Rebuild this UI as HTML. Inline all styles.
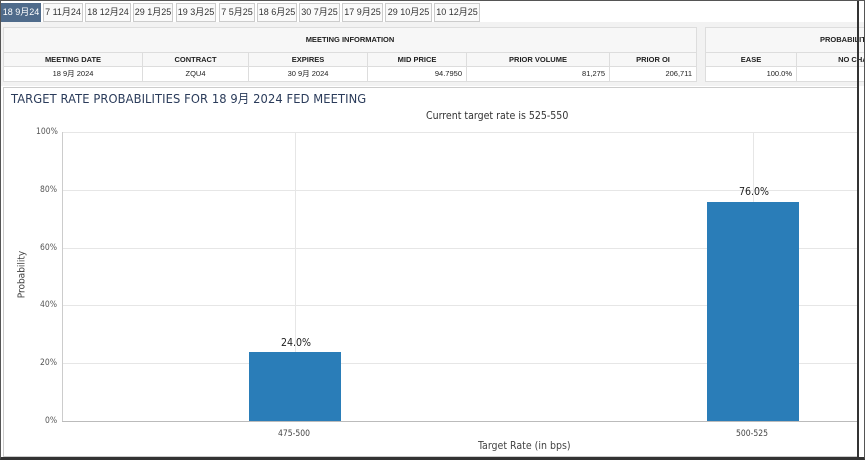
<!DOCTYPE html>
<html><head><meta charset="utf-8"><style>
*{margin:0;padding:0;box-sizing:border-box}
body{width:865px;height:460px;overflow:hidden;background:#fff;font-family:"Liberation Sans","Noto Sans CJK SC",sans-serif;position:relative}
.frame{position:absolute;left:0;top:0;width:865px;height:460px;border:1px solid #555;border-bottom:3px solid #333;}
.tab{position:absolute;top:3px;height:19px;border:1px solid #ccc;background:#fafafa;font-size:9px;color:#333;line-height:17px;text-align:center}
.tab.on{background:#4f6b8b;color:#fff;border-color:#4f6b8b}
.abs{position:absolute}
.cell{position:absolute;border:1px solid #ddd;font-size:7.5px;line-height:13px;color:#222}
.h{font-weight:bold;text-align:center;background:#f7f7f7}
.c{text-align:center}.r{text-align:right;padding-right:4px}
.t{position:absolute;font-family:"DejaVu Sans Condensed","Liberation Sans",sans-serif}
</style></head><body>
<div class="abs" style="left:1px;top:22px;width:863px;height:64px;background:#f2f2f2"></div>
<div class="tab on" style="left:1px;width:40px">18 9月24</div>
<div class="tab" style="left:43px;width:40px">7 11月24</div>
<div class="tab" style="left:85px;width:46px">18 12月24</div>
<div class="tab" style="left:133px;width:40px">29 1月25</div>
<div class="tab" style="left:176px;width:40px">19 3月25</div>
<div class="tab" style="left:219px;width:36px">7 5月25</div>
<div class="tab" style="left:257px;width:40px">18 6月25</div>
<div class="tab" style="left:299px;width:41px">30 7月25</div>
<div class="tab" style="left:342px;width:41px">17 9月25</div>
<div class="tab" style="left:385px;width:47px">29 10月25</div>
<div class="tab" style="left:434px;width:46px">10 12月25</div>

<div class="cell h" style="left:3px;top:27px;width:694px;height:26px;line-height:24px">MEETING INFORMATION</div>
<div class="cell h" style="left:3px;top:52px;width:140px;height:15px">MEETING DATE</div>
<div class="cell h" style="left:142px;top:52px;width:107px;height:15px">CONTRACT</div>
<div class="cell h" style="left:248px;top:52px;width:120px;height:15px">EXPIRES</div>
<div class="cell h" style="left:367px;top:52px;width:100px;height:15px">MID PRICE</div>
<div class="cell h" style="left:466px;top:52px;width:144px;height:15px">PRIOR VOLUME</div>
<div class="cell h" style="left:609px;top:52px;width:88px;height:15px">PRIOR OI</div>
<div class="cell c" style="left:3px;top:66px;width:140px;height:16px;background:#fff">18 9月 2024</div>
<div class="cell c" style="left:142px;top:66px;width:107px;height:16px;background:#fff">ZQU4</div>
<div class="cell c" style="left:248px;top:66px;width:120px;height:16px;background:#fff">30 9月 2024</div>
<div class="cell r" style="left:367px;top:66px;width:100px;height:16px;background:#fff">94.7950</div>
<div class="cell r" style="left:466px;top:66px;width:144px;height:16px;background:#fff">81,275</div>
<div class="cell r" style="left:609px;top:66px;width:88px;height:16px;background:#fff">206,711</div>

<div class="cell h" style="left:705px;top:27px;width:170px;height:26px;line-height:24px;text-align:left;padding-left:114px;overflow:hidden;white-space:nowrap">PROBABILITY</div>
<div class="cell h" style="left:705px;top:52px;width:92px;height:15px">EASE</div>
<div class="cell h" style="left:796px;top:52px;width:130px;height:15px;white-space:nowrap;overflow:hidden">NO CHANGE</div>
<div class="cell r" style="left:705px;top:66px;width:92px;height:16px;background:#fff">100.0%</div>
<div class="cell" style="left:796px;top:66px;width:90px;height:16px;background:#fff"></div>

<div class="abs" style="left:3px;top:87px;width:856px;height:370px;background:#fff;border:1px solid #ccc;border-right:none"></div>
<div class="abs" style="left:857px;top:0;width:2px;height:458px;background:#333"></div>
<div class="t" style="left:11px;top:88px;font-size:12.5px;color:#2a3b5a;font-family:'DejaVu Sans','Noto Sans CJK SC',sans-serif;letter-spacing:0.1px;transform:scaleX(0.92);transform-origin:left">TARGET RATE PROBABILITIES FOR 18 9月 2024 FED MEETING</div>
<div class="t" style="left:426px;top:110px;font-size:10.5px;color:#333">Current target rate is 525-550</div>

<svg class="abs" style="left:0;top:0" width="857" height="456">
<g stroke="#e6e6e6" stroke-width="1">
<line x1="62" y1="132.5" x2="858" y2="132.5"/><line x1="62" y1="190.5" x2="858" y2="190.5"/>
<line x1="62" y1="248.5" x2="858" y2="248.5"/><line x1="62" y1="305.5" x2="858" y2="305.5"/>
<line x1="62" y1="363.5" x2="858" y2="363.5"/>
<line x1="295.5" y1="132" x2="295.5" y2="421"/><line x1="753.5" y1="132" x2="753.5" y2="421"/>
</g>
<line x1="62.5" y1="132" x2="62.5" y2="421" stroke="#ccc"/>
<line x1="62" y1="421.5" x2="858" y2="421.5" stroke="#bbb"/>
<rect x="249" y="352" width="92" height="69" fill="#2a7db8"/>
<rect x="707" y="202" width="92" height="219" fill="#2a7db8"/>
</svg>
<div class="t" style="left:36px;top:127px;font-size:8.5px;color:#555">100%</div>
<div class="t" style="left:40px;top:185px;font-size:8.5px;color:#555">80%</div>
<div class="t" style="left:40px;top:243px;font-size:8.5px;color:#555">60%</div>
<div class="t" style="left:40px;top:300px;font-size:8.5px;color:#555">40%</div>
<div class="t" style="left:40px;top:358px;font-size:8.5px;color:#555">20%</div>
<div class="t" style="left:45px;top:416px;font-size:8.5px;color:#555">0%</div>
<div class="t" style="left:281px;top:337px;font-size:10.5px;color:#222">24.0%</div>
<div class="t" style="left:739px;top:186px;font-size:10.5px;color:#222">76.0%</div>
<div class="t" style="left:278px;top:429px;font-size:8.5px;color:#444">475-500</div>
<div class="t" style="left:736px;top:429px;font-size:8.5px;color:#444">500-525</div>
<div class="t" style="left:478px;top:440px;font-size:10.5px;color:#444">Target Rate (in bps)</div>
<div class="t" style="left:-8px;top:269px;font-size:10px;color:#444;transform:rotate(-90deg);width:60px;text-align:center">Probability</div>
<div class="frame"></div>
</body></html>
